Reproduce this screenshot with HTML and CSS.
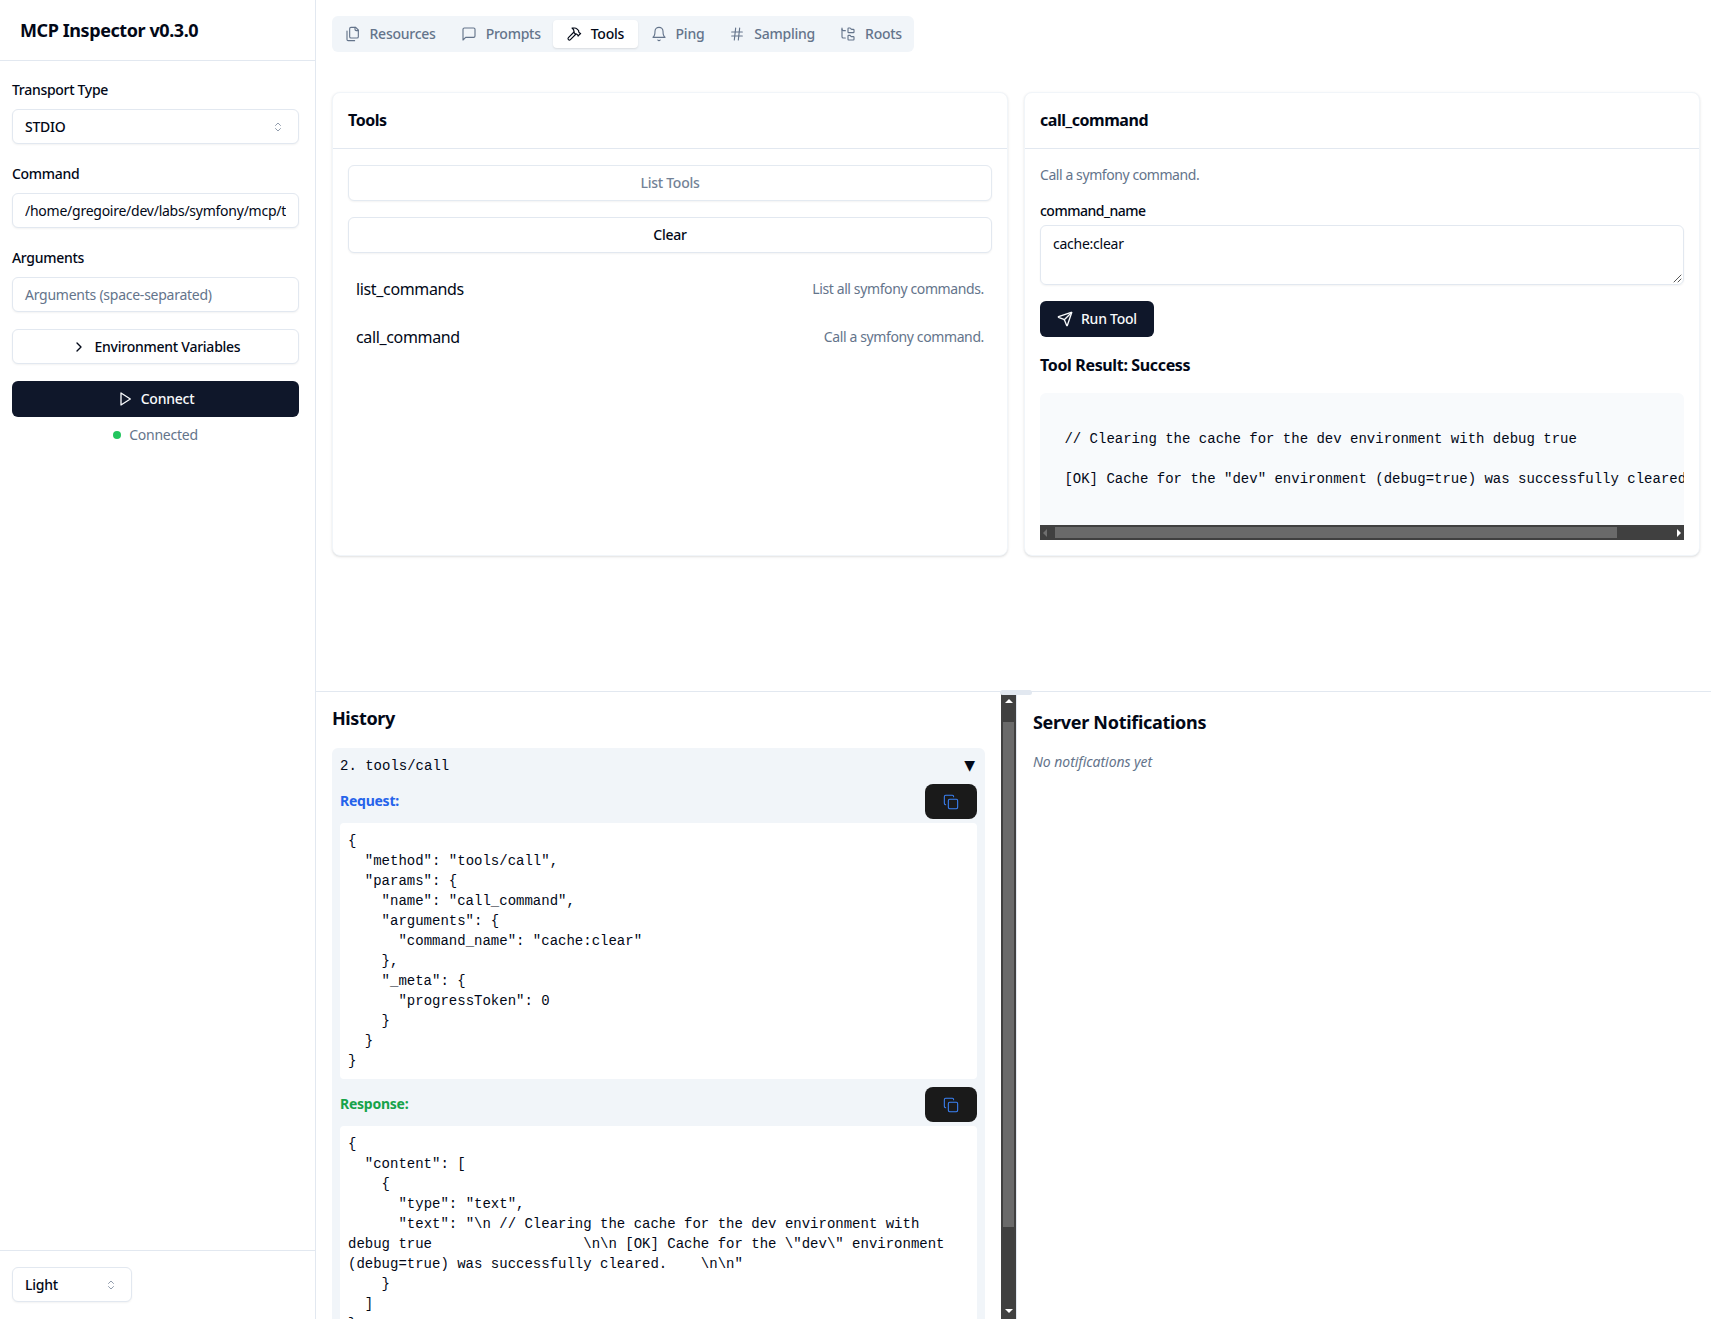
FILE: index.html
```html
<!DOCTYPE html>
<html lang="en">
<head>
<meta charset="utf-8">
<title>MCP Inspector</title>
<link rel="stylesheet" href="styles.css">
</head>
<body>
<aside class="sidebar">
  <header class="side-head"><h1>MCP Inspector v0.3.0</h1></header>
  <div class="side-body">
    <div class="field">
      <label class="lbl">Transport Type</label>
      <div class="control select"><span class="val">STDIO</span>
        <svg class="ico16 updown" viewBox="0 0 24 24"><path d="m7 15 5 5 5-5"/><path d="m7 9 5-5 5 5"/></svg></div>
    </div>
    <div class="field">
      <label class="lbl">Command</label>
      <div class="control"><span class="clip">/home/gregoire/dev/labs/symfony/mcp/tools/console</span></div>
    </div>
    <div class="field">
      <label class="lbl">Arguments</label>
      <div class="control placeholder">Arguments (space-separated)</div>
    </div>
    <div class="control btn-outline env">
      <svg class="ico16" viewBox="0 0 24 24"><path d="m9 18 6-6-6-6"/></svg>Environment Variables
    </div>
    <div class="btn-dark connect">
      <svg class="ico16" viewBox="0 0 24 24"><polygon points="6 3 20 12 6 21 6 3"/></svg>Connect
    </div>
    <div class="status"><i class="dot"></i>Connected</div>
  </div>
  <footer class="side-foot">
    <div class="control select theme"><span class="val">Light</span>
      <svg class="ico16 updown" viewBox="0 0 24 24"><path d="m7 15 5 5 5-5"/><path d="m7 9 5-5 5 5"/></svg></div>
  </footer>
</aside>

<main class="main">
  <section class="top">
    <nav class="tabs">
      <div class="tab"><svg class="ico16" viewBox="0 0 24 24"><path d="M20 7h-3a2 2 0 0 1-2-2V2"/><path d="M9 18a2 2 0 0 1-2-2V4a2 2 0 0 1 2-2h7l4 4v10a2 2 0 0 1-2 2Z"/><path d="M3 7.6v12.8A1.6 1.6 0 0 0 4.6 22h9.8"/></svg>Resources</div>
      <div class="tab"><svg class="ico16" viewBox="0 0 24 24"><path d="M21 15a2 2 0 0 1-2 2H7l-4 4V5a2 2 0 0 1 2-2h14a2 2 0 0 1 2 2z"/></svg>Prompts</div>
      <div class="tab active"><svg class="ico16" viewBox="0 0 24 24"><path d="m15 12-8.373 8.373a1 1 0 1 1-3-3L12 9"/><path d="m18 15 4-4"/><path d="m21.5 11.5-1.914-1.914A2 2 0 0 1 19 8.172V7l-2.26-2.26a6 6 0 0 0-4.202-1.756L9 2.96l.92.82A6.18 6.18 0 0 1 12 8.4V10l2 2h1.172a2 2 0 0 1 1.414.586L18.5 14.5"/></svg>Tools</div>
      <div class="tab"><svg class="ico16" viewBox="0 0 24 24"><path d="M6 8a6 6 0 0 1 12 0c0 7 3 9 3 9H3s3-2 3-9"/><path d="M10.3 21a1.94 1.94 0 0 0 3.4 0"/></svg>Ping</div>
      <div class="tab"><svg class="ico16" viewBox="0 0 24 24"><path d="M4 9h16"/><path d="M4 15h16"/><path d="M10 3 8 21"/><path d="M16 3l-2 18"/></svg>Sampling</div>
      <div class="tab"><svg class="ico16" viewBox="0 0 24 24"><path d="M20 10a1 1 0 0 0 1-1V6a1 1 0 0 0-1-1h-2.5a1 1 0 0 1-.8-.4l-.9-1.2A1 1 0 0 0 15 3h-2a1 1 0 0 0-1 1v5a1 1 0 0 0 1 1Z"/><path d="M20 21a1 1 0 0 0 1-1v-3a1 1 0 0 0-1-1h-2.9a1 1 0 0 1-.88-.55l-.42-.85a1 1 0 0 0-.92-.6H13a1 1 0 0 0-1 1v5a1 1 0 0 0 1 1Z"/><path d="M3 5a2 2 0 0 0 2 2h3"/><path d="M3 3v13a2 2 0 0 0 2 2h3"/></svg>Roots</div>
    </nav>
    <div class="cards">
      <article class="card">
        <h2 class="card-title">Tools</h2>
        <div class="card-body">
          <div class="btn-outline list-btn">List Tools</div>
          <div class="btn-outline clear-btn">Clear</div>
          <div class="tool-row"><span class="tool-name">list_commands</span><span class="tool-desc">List all symfony commands.</span></div>
          <div class="tool-row"><span class="tool-name">call_command</span><span class="tool-desc">Call a symfony command.</span></div>
        </div>
      </article>
      <article class="card">
        <h2 class="card-title">call_command</h2>
        <div class="card-body detail">
          <p class="desc">Call a symfony command.</p>
          <label class="lbl arg-lbl">command_name</label>
          <div class="textarea">cache:clear
            <svg class="grip" viewBox="0 0 10 10"><path d="M9 2 2 9M9 6 6 9"/></svg>
          </div>
          <div class="btn-dark run">
            <svg class="ico16" viewBox="0 0 24 24"><path d="M14.536 21.686a.5.5 0 0 0 .937-.024l6.5-19a.496.496 0 0 0-.635-.635l-19 6.5a.5.5 0 0 0-.024.937l7.93 3.18a2 2 0 0 1 1.112 1.11z"/><path d="m21.854 2.147-10.94 10.939"/></svg>Run Tool
          </div>
          <h4 class="result-title">Tool Result: Success</h4>
          <div class="result">
<pre class="result-pre">

 // Clearing the cache for the dev environment with debug true

 [OK] Cache for the "dev" environment (debug=true) was successfully cleared.

</pre>
            <div class="hbar"><i class="arrow left"></i><i class="hthumb"></i><i class="arrow right"></i></div>
          </div>
        </div>
      </article>
    </div>
  </section>

  <section class="bottom">
    <div class="grabber"></div>
    <div class="history">
      <div class="history-scroll">
        <h2 class="panel-title">History</h2>
        <div class="entry">
          <div class="entry-head"><span>2. tools/call</span><span class="caret">▼</span></div>
          <div class="pre-head req"><span class="pre-label">Request:</span>
            <div class="copy"><svg class="ico16" viewBox="0 0 24 24"><rect x="8" y="8" width="14" height="14" rx="2" ry="2"/><path d="M4 16c-1.1 0-2-.9-2-2V4c0-1.1.9-2 2-2h10c1.1 0 2 .9 2 2"/></svg></div></div>
<pre class="json">{
  "method": "tools/call",
  "params": {
    "name": "call_command",
    "arguments": {
      "command_name": "cache:clear"
    },
    "_meta": {
      "progressToken": 0
    }
  }
}</pre>
          <div class="pre-head res"><span class="pre-label">Response:</span>
            <div class="copy"><svg class="ico16" viewBox="0 0 24 24"><rect x="8" y="8" width="14" height="14" rx="2" ry="2"/><path d="M4 16c-1.1 0-2-.9-2-2V4c0-1.1.9-2 2-2h10c1.1 0 2 .9 2 2"/></svg></div></div>
<pre class="json">{
  "content": [
    {
      "type": "text",
      "text": "\n // Clearing the cache for the dev environment with debug true                  \n\n [OK] Cache for the \"dev\" environment (debug=true) was successfully cleared.    \n\n"
    }
  ]
}</pre>
        </div>
      </div>
      <div class="vbar"><i class="arrow up"></i><i class="vthumb"></i><i class="arrow down"></i></div>
    </div>
    <div class="notes">
      <h2 class="panel-title notes-title">Server Notifications</h2>
      <p class="none">No notifications yet</p>
    </div>
  </section>
</main>
</body>
</html>
```
FILE: styles.css
```css
* { box-sizing: border-box; }
html, body { margin: 0; height: 100%; }
body {
  display: flex;
  height: 100vh;
  overflow: hidden;
  background: #fff;
  color: #020817;
  font-family: "Noto Sans", "Open Sans", sans-serif;
  font-size: 14px;
  line-height: 20px;
  letter-spacing: -0.25px;
}
h1, h2, h4, p { margin: 0; }
svg { flex: none; fill: none; stroke: currentColor; stroke-width: 2; stroke-linecap: round; stroke-linejoin: round; }
.ico16 { width: 16px; height: 16px; }

.sidebar { width: 316px; flex: none; display: flex; flex-direction: column; border-right: 1px solid #e2e8f0; }
.side-head { height: 61px; flex: none; padding: 0 20px; display: flex; align-items: center; border-bottom: 1px solid #e2e8f0; }
.side-head h1 { font-size: 18px; font-weight: 700; line-height: 28px; letter-spacing: -0.42px; }
.side-body { flex: 1; padding: 19px 16px 16px 12px; display: flex; flex-direction: column; }
.field { display: flex; flex-direction: column; gap: 9px; flex: none; }
.field + .field { margin-top: 20px; }
.lbl { font-weight: 500; height: 20px; letter-spacing: -0.3px; }
.control {
  height: 35px; flex: none; padding: 0 12px; display: flex; align-items: center;
  border: 1px solid #e2e8f0; border-radius: 6px; background: #fff;
  box-shadow: 0 1px 2px rgba(0,0,0,.05);
}
.clip { overflow: hidden; white-space: nowrap; }
.select { justify-content: space-between; font-weight: 500; }
.updown { color: #64748b; opacity: .7; width: 12px; height: 12px; margin-right: 2px; }
.placeholder { color: #64748b; }
.btn-outline {
  display: flex; align-items: center; justify-content: center; height: 36px; flex: none;
  border: 1px solid #e2e8f0; border-radius: 6px; background: #fff; font-weight: 500;
  box-shadow: 0 1px 2px rgba(0,0,0,.05);
}
.env { gap: 8px; height: 35px; margin-top: 17px; }
.btn-dark {
  display: flex; align-items: center; justify-content: center; gap: 8px; height: 36px; flex: none;
  border-radius: 6px; background: #0f172a; color: #f8fafc; font-weight: 500;
}
.connect { margin-top: 17px; }
.status { display: flex; align-items: center; justify-content: center; gap: 8px; color: #64748b; margin-top: 8px; }
.dot { width: 8px; height: 8px; border-radius: 50%; background: #22c55e; }
.side-foot { height: 69px; flex: none; border-top: 1px solid #e2e8f0; padding: 16px 12px; }
.theme { width: 120px; }

.main { flex: 1; min-width: 0; display: flex; flex-direction: column; }
.top { flex: 1; min-height: 0; padding: 16px 11px 0 16px; display: flex; flex-direction: column; }
.tabs { align-self: flex-start; height: 36px; padding: 4px 0; display: flex; background: #f1f5f9; border-radius: 6px; color: #64748b; font-weight: 500; }
.tab { display: flex; align-items: center; gap: 9px; height: 28px; padding: 0 12.5px; border-radius: 4px; }
.tab svg { stroke-width: 1.7; }
.tab.active { background: #fff; color: #020817; box-shadow: 0 1px 2px rgba(0,0,0,.1); padding-right: 14px; }

.cards { margin-top: 40px; display: grid; grid-template-columns: minmax(0, 1fr) minmax(0, 1fr); gap: 16px; }
.card { height: 464px; min-width: 0; border: 1px solid #f1f5f9; border-radius: 8px; background: #fff; box-shadow: 0 1px 3px rgba(0,0,0,.1), 0 1px 2px -1px rgba(0,0,0,.1); display: flex; flex-direction: column; }
.card-title { height: 56px; flex: none; padding: 0 15px 2px; display: flex; align-items: center; font-size: 16px; font-weight: 700; letter-spacing: -0.45px; border-bottom: 1px solid #e2e8f0; }
.card-body { flex: 1; padding: 16px 15px; min-height: 0; min-width: 0; }
.list-btn { color: #64748b; opacity: .9; }
.clear-btn { margin-top: 16px; }
.tool-row { height: 48px; padding: 0 8px; display: flex; align-items: center; justify-content: space-between; }
.list-btn + .clear-btn + .tool-row { margin-top: 12px; }
.tool-name { font-size: 16px; letter-spacing: -0.35px; }
.tool-desc { color: #64748b; letter-spacing: -0.38px; }
.detail { display: flex; flex-direction: column; }
.desc { color: #64748b; height: 20px; flex: none; letter-spacing: -0.42px; }
.arg-lbl { margin-top: 16px; margin-bottom: 4px; flex: none; letter-spacing: -0.5px; }
.textarea { position: relative; height: 60px; flex: none; padding: 8px 12px; border: 1px solid #e2e8f0; border-radius: 6px; box-shadow: 0 1px 2px rgba(0,0,0,.05); }
.grip { position: absolute; right: 1px; bottom: 1px; width: 10px; height: 10px; color: #555; stroke-width: 1; }
.run { align-self: flex-start; margin-top: 16px; padding: 0 17px; }
.result-title { margin-top: 16px; font-size: 16px; font-weight: 700; line-height: 24px; letter-spacing: -0.35px; flex: none; }
.result { margin-top: 16px; height: 147px; flex: none; border-radius: 6px 6px 0 0; background: #f8fafc; display: flex; flex-direction: column; overflow: hidden; }
.result-pre { flex: 1; min-height: 0; margin: 0; padding: 16px 16px 0; overflow: hidden; font-family: "Liberation Mono", monospace; font-size: 14px; line-height: 20px; letter-spacing: 0; }
.hbar { height: 15px; flex: none; background: #404040; display: flex; align-items: center; padding: 2px 3px; }
.hthumb { width: 562px; height: 11px; margin-left: 8px; background: #6a6a6a; }
.arrow { width: 0; height: 0; border-style: solid; border-color: transparent; flex: none; }
.arrow.left { border-width: 4px 4px 4px 0; border-right-color: #6f6f6f; }
.arrow.right { margin-left: auto; border-width: 4px 0 4px 4px; border-left-color: #fff; }
.arrow.up { border-width: 0 4px 4px; border-bottom-color: #fff; }
.arrow.down { margin-top: auto; border-width: 4px 4px 0; border-top-color: #fff; }

.bottom { position: relative; height: 628px; flex: none; display: flex; border-top: 1px solid #e2e8f0; }
.grabber { position: absolute; left: 684px; top: -2px; width: 32px; height: 5px; border-radius: 3px; background: #e2e8f0; }
.history { width: 701px; flex: none; display: flex; border-right: 1px solid #e2e8f0; padding-top: 2px; }
.history-scroll { flex: 1; min-width: 0; overflow: hidden; padding: 10px 16px 0; }
.panel-title { font-size: 18px; font-weight: 700; line-height: 28px; letter-spacing: -0.4px; }
.notes-title { letter-spacing: -0.3px; }
.entry { margin-top: 16px; background: #f1f5f9; border-radius: 6px; padding: 8px; }
.entry-head { height: 20px; display: flex; justify-content: space-between; align-items: center; font-family: "Liberation Mono", monospace; letter-spacing: 0; }
.caret { font-family: "DejaVu Sans", sans-serif; font-size: 14px; line-height: 18px; padding-right: 2px; padding-bottom: 2px; }
.pre-head { display: flex; align-items: center; justify-content: space-between; height: 35px; margin-top: 8px; font-weight: 700; }
.pre-label { padding-bottom: 2px; }
.req { color: #2563eb; }
.res { color: #16a34a; }
.copy { width: 52px; height: 35px; border-radius: 8px; background: #1a1a1a; color: #3b82f6; display: flex; align-items: center; justify-content: center; }
.copy svg { stroke-width: 1.6; }
.json { margin: 4px 0 8px; padding: 8px; background: #fff; border-radius: 4px; font-family: "Liberation Mono", monospace; font-size: 14px; line-height: 20px; letter-spacing: 0; white-space: pre-wrap; overflow-wrap: break-word; }
.vbar { width: 15px; flex: none; background: #404040; display: flex; flex-direction: column; align-items: center; padding: 5px 2px 6px; }
.vthumb { width: 11px; height: 505px; margin-top: 19px; background: #6a6a6a; flex: none; }
.notes { flex: 1; padding: 16px 16px 0; }
.none { margin-top: 16px; color: #64748b; font-style: italic; letter-spacing: -0.05px; }
```
